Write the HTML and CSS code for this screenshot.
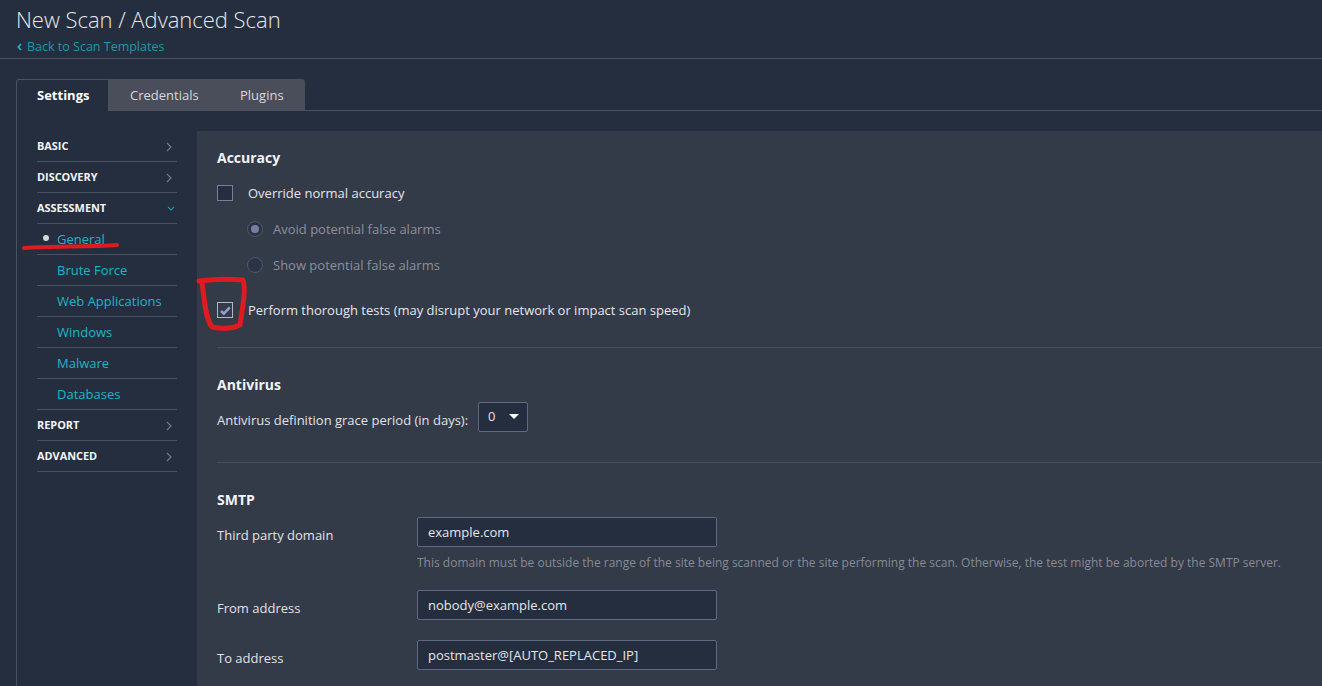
FILE: index.html
```html
<!DOCTYPE html>
<html lang="en">
<head>
<meta charset="utf-8">
<title>New Scan / Advanced Scan</title>
<link rel="stylesheet" href="styles.css">
</head>
<body>
<header class="page-header">
  <h1 class="title">New Scan / Advanced Scan</h1>
  <a class="back"><svg class="back-icon" width="5" height="8" viewBox="0 0 5 8"><path d="M4 1 1.3 4 4 7" fill="none" stroke="#1fb4c8" stroke-width="1.7"/></svg>Back to Scan Templates</a>
</header>
<main class="content">
  <nav class="tabs">
    <div class="tab active">Settings</div>
    <div class="inactive-tabs">
      <div class="tab cred">Credentials</div>
      <div class="tab plug">Plugins</div>
    </div>
  </nav>
  <div class="body">
    <aside class="side">
      <div class="sec">BASIC<svg class="chev" width="6" height="10" viewBox="0 0 6 10"><path d="M1 1l4 4-4 4" /></svg></div>
      <div class="sec">DISCOVERY<svg class="chev" width="6" height="10" viewBox="0 0 6 10"><path d="M1 1l4 4-4 4" /></svg></div>
      <div class="sec">ASSESSMENT<svg class="chev open" width="8" height="6" viewBox="0 0 8 6"><path d="M1 1l3 3 3-3" /></svg></div>
      <div class="item current"><span class="dot"></span>General</div>
      <div class="item">Brute Force</div>
      <div class="item">Web Applications</div>
      <div class="item">Windows</div>
      <div class="item">Malware</div>
      <div class="item">Databases</div>
      <div class="sec">REPORT<svg class="chev" width="6" height="10" viewBox="0 0 6 10"><path d="M1 1l4 4-4 4" /></svg></div>
      <div class="sec">ADVANCED<svg class="chev" width="6" height="10" viewBox="0 0 6 10"><path d="M1 1l4 4-4 4" /></svg></div>
    </aside>
    <section class="panel">
      <div class="group accuracy">
        <h2 class="heading">Accuracy</h2>
        <div class="check-row first"><span class="box"></span><span>Override normal accuracy</span></div>
        <div class="radio-row r1"><span class="radio on"></span><span>Avoid potential false alarms</span></div>
        <div class="radio-row r2"><span class="radio"></span><span>Show potential false alarms</span></div>
        <div class="check-row second"><span class="box checked"><svg width="13" height="11" viewBox="0 0 13 11"><path d="M2 6 4.8 8.6 10.8 2.4" fill="none" stroke="#929dcb" stroke-width="2.6"/></svg></span><span>Perform thorough tests (may disrupt your network or impact scan speed)</span></div>
      </div>
      <div class="group antivirus">
        <h2 class="heading">Antivirus</h2>
        <div class="av-row"><span class="av-label">Antivirus definition grace period (in days):</span><span class="select">0<span class="caret"></span></span></div>
      </div>
      <div class="group smtp">
        <h2 class="heading">SMTP</h2>
        <div class="field f1"><label class="label">Third party domain</label><div class="input">example.com</div></div>
        <p class="hint">This domain must be outside the range of the site being scanned or the site performing the scan. Otherwise, the test might be aborted by the SMTP server.</p>
        <div class="field f2"><label class="label">From address</label><div class="input">nobody@example.com</div></div>
        <div class="field f3"><label class="label">To address</label><div class="input">postmaster@[AUTO_REPLACED_IP]</div></div>
      </div>
    </section>
  </div>
</main>
<svg class="marks" width="1322" height="686" viewBox="0 0 1322 686"><path class="underline" d="M24 248C50 246 90 247 117 245" /><path class="bracket" d="M199 281C215 279 232 279 243 280C246 290 243 305 240 325C232 329 220 329 212 327C205 318 204 296 202 282" /></svg>
</body>
</html>
```
FILE: styles.css
```css
* { box-sizing: border-box; }
html, body { margin: 0; height: 100%; overflow: hidden; }
body { background: #252e3e; color: #f0f2f5; font: 13px/18px "Open Sans", sans-serif; position: relative; }
.page-header { height: 59px; border-bottom: 1px solid #4a515f; padding: 4px 16px 0; }
.title { margin: 0; font-weight: 300; font-size: 22px; line-height: 30px; color: #e6e8ec; letter-spacing: -0.02px; }
.back { display: flex; align-items: center; color: #1c98ab; font-size: 12.5px; line-height: 18px; margin-top: 4px; }
.back-icon { margin-right: 5px; margin-left: 1px; }
.content { padding: 20px 0 0 16px; }
.tabs { display: flex; height: 32px; border-bottom: 1px solid #4a515f; }
.tab { height: 32px; font-size: 13px; line-height: 32px; color: #d6d8dd; }
.tab.active { width: 93px; font-weight: 700; color: #fff; background: #252e3e; border: 1px solid #4a515f; border-bottom: 0; border-radius: 3px 0 0 0; line-height: 31px; padding-left: 20px; }
.inactive-tabs { display: flex; width: 196px; background: #4a4e5a; border-radius: 0 3px 0 0; height: 31px; }
.tab.cred { padding-left: 21px; width: 131px; line-height: 32px; }
.tab.plug { line-height: 32px; }
.body { display: flex; border-left: 1px solid #4a515f; padding: 20px 0 0 20px; height: 600px; }
.side { width: 140px; flex: none; margin-right: 20px; }
.sec, .item { height: 31px; border-bottom: 1px solid #4a515f; display: flex; align-items: center; position: relative; }
.sec { font-size: 10.9px; font-weight: 700; color: #f4f5f7; }
.item { padding-left: 20px; color: #1cb5c9; font-size: 13px; }
.current { padding-bottom: 1px; }
.chev { position: absolute; right: 5px; top: 11px; fill: none; stroke: #717b93; stroke-width: 1.1; }
.chev.open { top: 13px; right: 2px; stroke: #1c98ab; }
.dot { position: absolute; left: 6px; top: 11px; width: 6px; height: 6px; border-radius: 50%; background: #d3d6da; }
.panel { flex: 1; background: #333a48; padding: 0 0 0 20px; min-width: 0; }
.heading { margin: 0; font-size: 14px; line-height: 20px; font-weight: 700; color: #f2f3f5; }
.group { border-bottom: 1px solid #454c5a; }
.smtp { border-bottom: 0; }
.accuracy { height: 217px; padding-top: 17px; }
.check-row { display: flex; align-items: center; color: #e4e6ea; }
.check-row.first { margin-top: 16px; height: 18px; }
.check-row.second { margin-top: 27px; height: 18px; }
.box { width: 16px; height: 16px; border: 1px solid #77809a; background: #252e3e; margin-right: 15px; display: flex; align-items: center; justify-content: center; flex: none; }
.box.checked { border-color: #b3b7c4; background: #333a48; }
.radio-row { display: flex; align-items: center; color: #8b909b; padding-left: 30px; height: 18px; }
.r1 { margin-top: 18px; }
.r2 { margin-top: 18px; }
.radio { width: 16px; height: 16px; border-radius: 50%; border: 1px solid #4e586d; background: #2b3444; margin-right: 10px; flex: none; position: relative; }
.radio.on::after { content: ""; position: absolute; left: 3px; top: 3px; width: 8px; height: 8px; border-radius: 50%; background: #767f9f; }
.antivirus { height: 115px; padding-top: 27px; }
.av-row { display: flex; align-items: center; margin-top: 7px; color: #e0e2e6; }
.av-label { padding-top: 5px; }
.select { display: flex; align-items: center; width: 50px; height: 30px; margin-left: 10px; padding: 0 0 2px 9px; border: 1px solid #5e6a84; border-radius: 2px; background: #252e3e; }
.caret { margin-left: 13px; border: 5px solid transparent; border-top-color: #fff; border-bottom: 0; }
.smtp { padding-top: 27px; }
.field { display: flex; }
.label { width: 200px; color: #e0e2e6; padding-top: 9px; }
.input { width: 300px; height: 30px; border: 1px solid #5e6a84; border-radius: 2px; background: #252e3e; padding: 5px 10px; color: #e4e6ea; }
.f1 { margin-top: 7px; }
.hint { margin: 7px 0 0 200px; font-size: 12px; color: #868b96; line-height: 18px; white-space: nowrap; }
.f2 { margin-top: 18px; }
.f3 { margin-top: 20px; }
.marks { position: absolute; left: 0; top: 0; fill: none; stroke: #e01b1f; stroke-width: 4; stroke-linecap: round; stroke-linejoin: round; pointer-events: none; }
.bracket { stroke-width: 5; }
```
